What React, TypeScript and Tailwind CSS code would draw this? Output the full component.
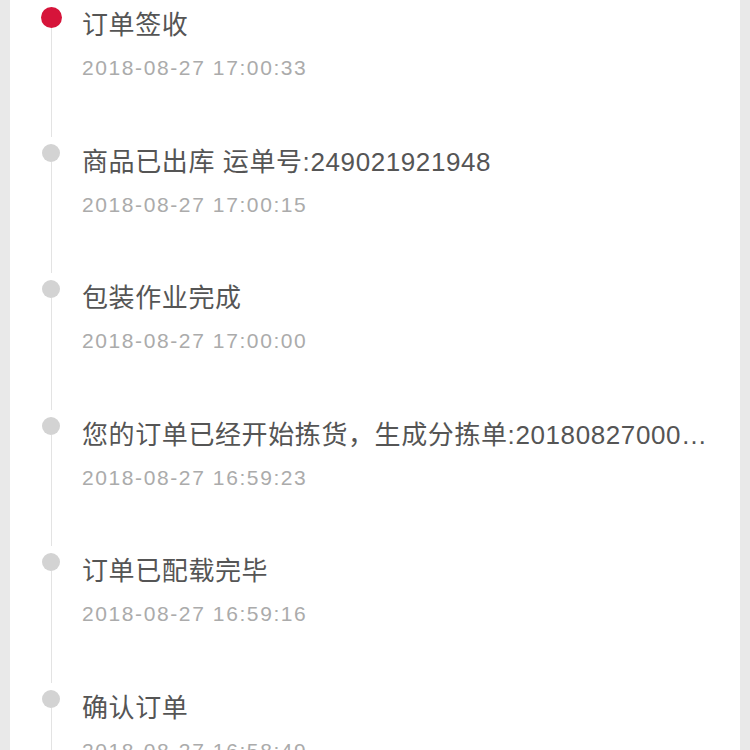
const steps = [
  { title: "订单签收", time: "2018-08-27 17:00:33" },
  { title: "商品已出库 运单号:249021921948", time: "2018-08-27 17:00:15" },
  { title: "包装作业完成", time: "2018-08-27 17:00:00" },
  {
    title: "您的订单已经开始拣货，生成分拣单:2018082700012345",
    time: "2018-08-27 16:59:23",
  },
  { title: "订单已配载完毕", time: "2018-08-27 16:59:16" },
  { title: "确认订单", time: "2018-08-27 16:58:49" },
];

export default function App() {
  return (
    <div
      className="w-[750px] h-[750px] bg-[#e9e9e9] px-[10px] overflow-hidden"
      style={{ fontFamily: '"Liberation Sans", "Noto Sans CJK SC", sans-serif' }}
    >
      <div className="h-full bg-white pl-[30px] pr-[20px] overflow-hidden">
        {steps.map((step, i) => (
          <div key={i} className="flex h-[136.6px]">
            <div className="flex flex-col items-center w-[22px] shrink-0 pt-[7px]">
              {i === 0 ? (
                <div className="w-[21px] h-[21px] rounded-full bg-[#d6143a] shrink-0" />
              ) : (
                <div className="w-[18px] h-[18px] rounded-full bg-[#d3d3d3] shrink-0" />
              )}
              <div className="flex-1 w-px bg-[#e3e3e3]" />
            </div>
            <div className="ml-[20px] min-w-0 flex-1 pt-[8px]">
              <div className="text-[26px] leading-[34px] tracking-[0.6px] text-[#555555] truncate">
                {step.title}
              </div>
              <div className="mt-[12px] text-[21px] leading-[28px] tracking-[1.6px] text-[#ababab]">
                {step.time}
              </div>
            </div>
          </div>
        ))}
      </div>
    </div>
  );
}
